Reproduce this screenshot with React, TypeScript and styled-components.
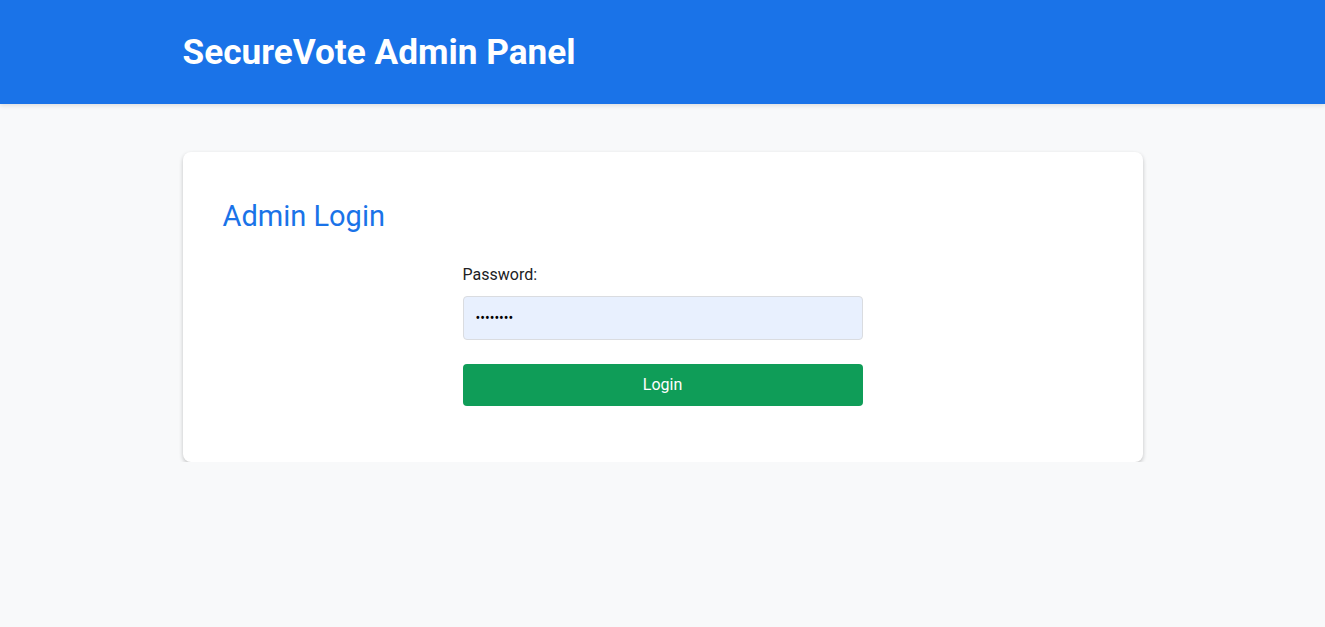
import React from 'react'
import styled, { createGlobalStyle } from 'styled-components'

const GlobalStyle = createGlobalStyle`
  * {
    box-sizing: border-box;
  }
  body {
    margin: 0;
    background-color: #f8f9fa;
    font-family: Roboto, 'Liberation Sans', sans-serif;
    color: #202124;
  }
`

const StyledHeader = styled.header`
  background-color: #1a73e8;
  height: 104px;
  display: flex;
  align-items: center;
  box-shadow: 0 2px 4px rgba(0, 0, 0, 0.1);
`

const StyledContainer = styled.div`
  width: 960px;
  margin: 0 auto;
`

const StyledTitle = styled.h1`
  margin: 0;
  font-size: 35.2px;
  font-weight: 700;
  color: #ffffff;
`

const StyledMain = styled(StyledContainer)`
  padding-top: 48px;
`

const StyledCard = styled.section`
  background-color: #ffffff;
  border-radius: 8px;
  box-shadow: 0 2px 4px rgba(0, 0, 0, 0.22);
  padding: 48px 40px 56px;
`

const StyledCardTitle = styled.h2`
  margin: 0 0 31px;
  font-size: 29px;
  font-weight: 400;
  line-height: 1.16;
  color: #1a73e8;
`

const StyledForm = styled.form`
  width: 400px;
  margin: 0 auto;
  display: flex;
  flex-direction: column;
`

const StyledLabel = styled.label`
  font-size: 16px;
  color: #202124;
  margin-bottom: 12px;
`

const StyledInput = styled.input`
  height: 44px;
  padding: 0 12px;
  border: 1px solid #dadce0;
  border-radius: 4px;
  background-color: #e8f0fe;
  font-family: inherit;
  font-size: 14px;
  color: #000000;
  outline: none;
  margin-bottom: 24px;
`

const StyledButton = styled.button`
  height: 42px;
  border: none;
  border-radius: 4px;
  background-color: #0f9d58;
  color: #ffffff;
  font-family: inherit;
  font-size: 16px;
  cursor: pointer;
`

export default function App() {
  return (
    <>
      <GlobalStyle />
      <StyledHeader>
        <StyledContainer>
          <StyledTitle>SecureVote Admin Panel</StyledTitle>
        </StyledContainer>
      </StyledHeader>
      <StyledMain>
        <StyledCard>
          <StyledCardTitle>Admin Login</StyledCardTitle>
          <StyledForm onSubmit={e => e.preventDefault()}>
            <StyledLabel htmlFor='password'>Password:</StyledLabel>
            <StyledInput id='password' type='password' defaultValue='password' readOnly />
            <StyledButton type='submit'>Login</StyledButton>
          </StyledForm>
        </StyledCard>
      </StyledMain>
    </>
  )
}
